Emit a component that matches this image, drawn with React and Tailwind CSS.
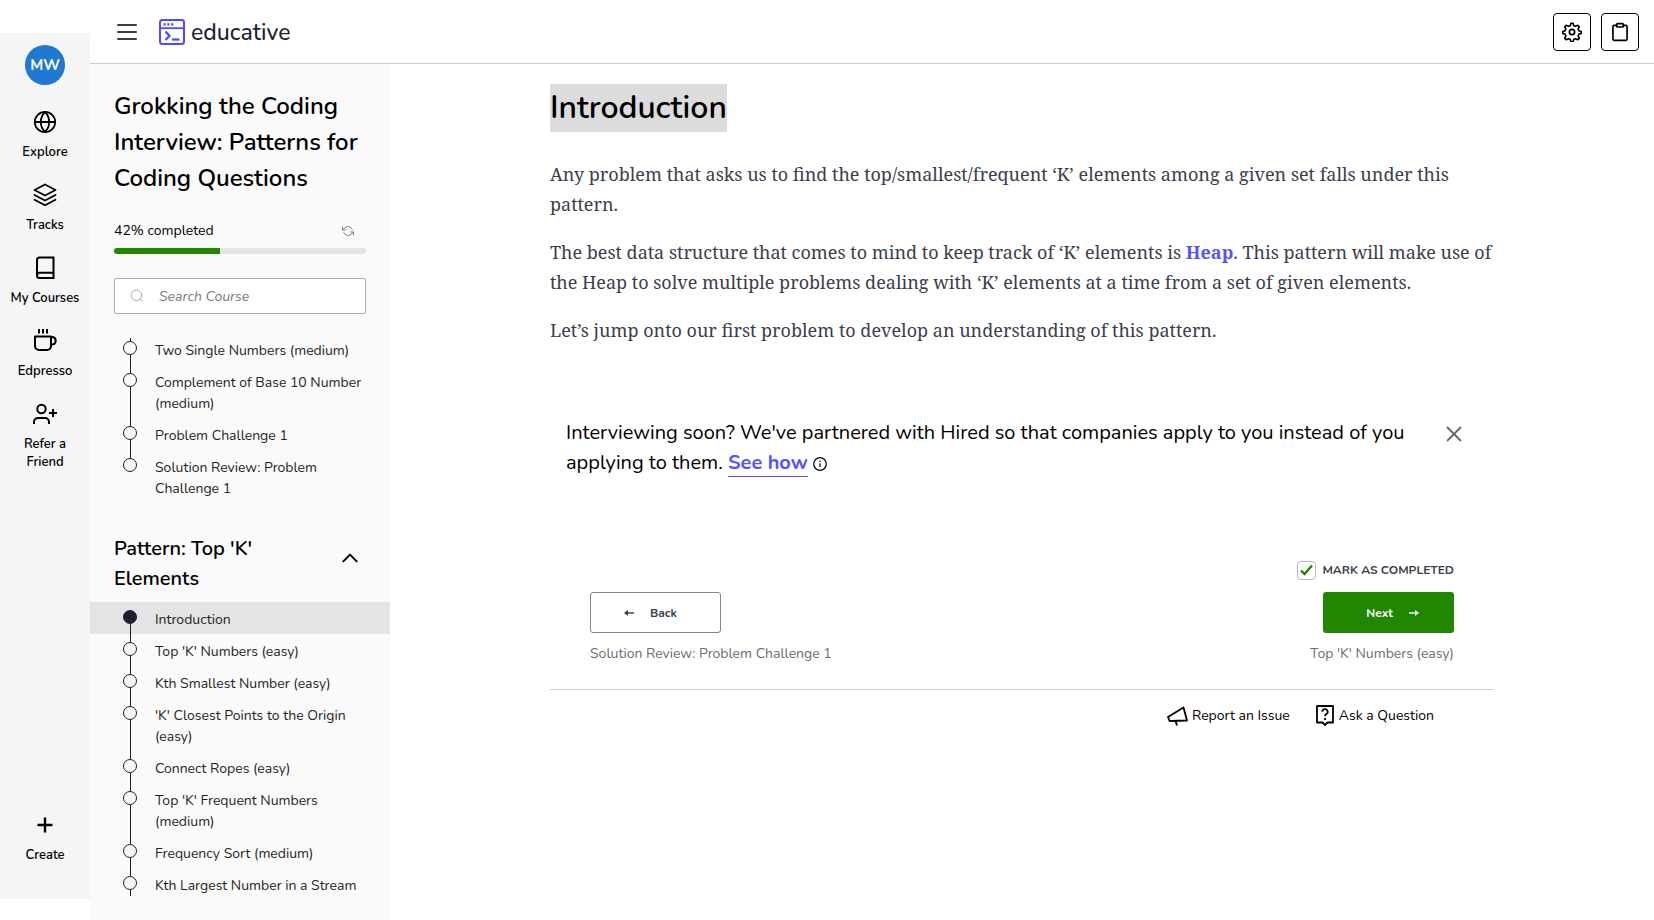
import React from "react";

const stroke = {
  fill: "none",
  stroke: "currentColor",
  strokeWidth: 2,
  strokeLinecap: "round",
  strokeLinejoin: "round",
};

function Icon({ size = 24, children, ...rest }) {
  return (
    <svg width={size} height={size} viewBox="0 0 24 24" aria-hidden="true" {...stroke} {...rest}>
      {children}
    </svg>
  );
}

const GlobeIcon = () => (
  <Icon strokeWidth={1.8}>
    <circle cx="12" cy="12" r="10.2" />
    <path d="M2 12h20" />
    <path d="M12 2c-2.600 2.600-4.200 6-4.200 10s1.600 7.400 4.200 10c2.600-2.600 4.200-6 4.200-10S14.600 4.600 12 2z" />
  </Icon>
);

const LayersIcon = () => (
  <Icon strokeWidth={1.8}>
    <path d="M12 1.500 1.500 7 12 12.500 22.500 7z" />
    <path d="m1.500 12 10.500 5.500L22.500 12" />
    <path d="m1.500 16.800 10.500 5.500 10.500-5.500" />
  </Icon>
);

const BookIcon = () => (
  <Icon strokeLinecap="butt" strokeLinejoin="miter">
    <path d="M4 19.500V4a2.500 2.500 0 0 1 2.500-2.500H20.500v20.500H6.500A2.500 2.500 0 0 1 4 19.500a2.500 2.500 0 0 1 2.500-2.800H20.500" />
  </Icon>
);

const CupIcon = () => (
  <Icon strokeLinecap="butt">
    <path d="M2 7.500h16v9.500a4 4 0 0 1-4 4H6a4 4 0 0 1-4-4z" />
    <path d="M18 8h1.500a3.800 3.800 0 0 1 0 7.500H18" />
    <path d="M6 0v4.500M10 0v4.500M14 0v4.500" />
  </Icon>
);

const UserPlusIcon = () => (
  <Icon strokeLinecap="butt">
    <circle cx="8.500" cy="7" r="4.200" />
    <path d="M1 22v-2a4 4 0 0 1 4-4h7a4 4 0 0 1 4 4v2" />
    <path d="M20 7v8M16 11h8" />
  </Icon>
);

const navItems = [
  { label: "Explore", icon: GlobeIcon },
  { label: "Tracks", icon: LayersIcon },
  { label: "My Courses", icon: BookIcon },
  { label: "Edpresso", icon: CupIcon },
  { label: "Refer a Friend", icon: UserPlusIcon },
];

function Rail() {
  return (
    <nav
      aria-label="Main"
      className="mt-[33px] mb-[21px] flex w-[90px] shrink-0 flex-col items-center bg-[#f5f5f5] pt-3 pb-[35px] text-[13px] leading-[18px] font-semibold text-black"
    >
      <button className="mb-[25px] flex h-10 w-10 items-center justify-center rounded-full bg-[#1f78d1] text-[15px] font-bold text-white">
        MW
      </button>
      <div className="flex flex-col items-center gap-[22px]">
        {navItems.map(({ label, icon: Glyph }) => (
          <a key={label} href="#" className="flex w-20 flex-col items-center gap-[9px] text-center">
            <Glyph />
            <span className={label === "Refer a Friend" ? "w-14" : ""}>{label}</span>
          </a>
        ))}
      </div>
      <button className="mt-auto flex flex-col items-center gap-[9px]">
        <Icon strokeLinecap="butt" strokeWidth={2.4}>
          <path d="M12 4.500v15M4.500 12h15" />
        </Icon>
        Create
      </button>
    </nav>
  );
}

function Logo() {
  return (
    <a href="#" className="flex items-center gap-1.5 text-[23px] leading-[30px] font-medium text-[#1f1f33]">
      <svg width="26" height="26" viewBox="0 0 26 26" fill="none" stroke="#4b4bff" aria-hidden="true">
        <rect x="1" y="1" width="24" height="24" rx="2.500" strokeWidth="2" />
        <path d="M1 9.200h24" strokeWidth="1.800" />
        <path d="M4.500 5.400h2.200M8.300 5.400h2.200M12.100 5.400h2.200" strokeWidth="2.200" />
        <path d="m6.500 12.500 4 4.200-4 4.200" strokeWidth="2.200" />
        <path d="M13 20.500h7.500" strokeWidth="2.200" />
      </svg>
      <span className="mt-0.5">educative</span>
    </a>
  );
}

function Header() {
  return (
    <header className="flex h-16 items-center border-b border-[#cfcfcf] pr-[15px] pl-[27px]">
      <button aria-label="Menu" className="mr-[22px] flex w-5 flex-col gap-[5px]">
        <span className="h-0.5 rounded-full bg-[#3d3d3d]" />
        <span className="h-0.5 rounded-full bg-[#3d3d3d]" />
        <span className="h-0.5 rounded-full bg-[#3d3d3d]" />
      </button>
      <Logo />
      <div className="ml-auto flex gap-2.5">
        <button aria-label="Settings" className="flex h-[38px] w-[38px] items-center justify-center rounded border border-black">
          <Icon size={20} strokeWidth={2}>
            <circle cx="12" cy="12" r="3.200" />
            <path d="M10.800 1.500h2.400l1 2.900 2 .8 2.800-1.300 1.700 1.700-1.300 2.800.8 2 2.900 1v2.400l-2.900 1-.8 2 1.300 2.800-1.700 1.700-2.800-1.300-2 .8-1 2.900h-2.400l-1-2.900-2-.8L5 21.300l-1.700-1.700 1.300-2.800-.8-2-2.900-1v-2.400l2.900-1 .8-2L3.300 5.600 5 3.900l2.800 1.300 2-.8z" />
          </Icon>
        </button>
        <button aria-label="Notes" className="flex h-[38px] w-[38px] items-center justify-center rounded border border-black">
          <Icon size={20}>
            <path d="M16 4h3a1.500 1.500 0 0 1 1.500 1.500v15a1.500 1.500 0 0 1-1.500 1.500H5a1.500 1.500 0 0 1-1.500-1.500v-15A1.500 1.500 0 0 1 5 4h3" />
            <rect x="8" y="2" width="8" height="4" rx="1" />
          </Icon>
        </button>
      </div>
    </header>
  );
}

const previousLessons = [
  "Two Single Numbers (medium)",
  "Complement of Base 10 Number (medium)",
  "Problem Challenge 1",
  "Solution Review: Problem Challenge 1",
];

const topKLessons = [
  "Introduction",
  "Top 'K' Numbers (easy)",
  "Kth Smallest Number (easy)",
  "'K' Closest Points to the Origin (easy)",
  "Connect Ropes (easy)",
  "Top 'K' Frequent Numbers (medium)",
  "Frequency Sort (medium)",
  "Kth Largest Number in a Stream",
];

function Lesson({ title, active, first, last }) {
  return (
    <li>
      <a
        href="#"
        aria-current={active ? "page" : undefined}
        className={`flex gap-[18px] pr-5 pl-[33px] ${active ? "bg-[#e4e4e4]" : ""}`}
      >
        <span className="flex w-3.5 shrink-0 flex-col items-center">
          <span className={`h-2 w-px ${first ? "" : "bg-[#1f1f33]"}`} />
          <span
            className={`h-3.5 w-3.5 rounded-full border border-[#1f1f33] ${active ? "bg-[#1f1f33]" : "bg-[#f8f8f8]"}`}
          />
          <span className={`w-px flex-1 ${last ? "" : "bg-[#1f1f33]"}`} />
        </span>
        <span className="pt-[7px] pb-1">{title}</span>
      </a>
    </li>
  );
}

function Sidebar() {
  return (
    <aside className="flex w-[300px] shrink-0 flex-col bg-[#fafafa] pt-6 pb-6">
      <div className="px-6">
        <h2 className="text-[24px] leading-9 font-semibold text-black">
          Grokking the Coding Interview: Patterns for Coding Questions
        </h2>
        <div className="mt-[25px] flex items-center justify-between pr-3 text-[14px] leading-5 text-black">
          <span id="progress-label">42% completed</span>
          <button aria-label="Reset progress" className="text-[#777777]">
            <Icon size={12} strokeWidth={1.8}>
              <path d="M1 4v6h6M23 20v-6h-6" />
              <path d="M20.500 9A9 9 0 0 0 5.600 5.600L1 10m22 4-4.600 4.400A9 9 0 0 1 3.500 15" />
            </Icon>
          </button>
        </div>
        <div
          role="progressbar"
          aria-labelledby="progress-label"
          aria-valuenow={42}
          className="mt-[7px] h-1.5 overflow-hidden rounded-full bg-[#e4e4e4]"
        >
          <div className="h-full w-[42%] bg-[#218700]" />
        </div>
        <label className="mt-6 flex h-9 items-center gap-[15px] rounded-xs border border-[#ababb2] bg-white pr-3 pl-[15px] text-[#9a9a9a]">
          <Icon size={14} strokeWidth={1.5}>
            <circle cx="11" cy="11" r="9" />
            <path d="m18 18 4 4" />
          </Icon>
          <input
            type="text"
            aria-label="Search Course"
            placeholder="Search Course"
            className="min-w-0 flex-1 text-[14px] text-[#333333] italic outline-none placeholder:text-[#7b7b7b]"
          />
        </label>
      </div>

      <div className="mt-6 overflow-hidden text-[14px] leading-[21px] text-[#1f1f1f]">
        <ul className="-mt-[5px]">
          {previousLessons.map((title, i) => (
            <Lesson key={title} title={title} last={i === previousLessons.length - 1} />
          ))}
        </ul>
        <button className="mt-[31px] mb-2 flex w-full items-start justify-between pr-[30px] pl-6 text-left text-[20px] leading-[30px] font-semibold text-black">
          <span className="w-40">Pattern: Top 'K' Elements</span>
          <Icon size={20} strokeWidth={2.4} className="mt-3.5">
            <path d="m4 16 8-8 8 8" />
          </Icon>
        </button>
        <ul className="-mb-1">
          {topKLessons.map((title, i) => (
            <Lesson key={title} title={title} active={i === 0} first={i === 0} />
          ))}
        </ul>
      </div>
    </aside>
  );
}

function Article() {
  return (
    <article>
      <h1 className="text-[32px] leading-[48px] font-semibold text-black">
        <span className="inline-block bg-[#dcdcdc]">Introduction</span>
      </h1>
      <div className="mt-[27px] flex flex-col gap-[18px] font-['Noto_Serif','Liberation_Serif',serif] text-[18px] leading-[30px] text-[#3d3d4e]">
        <p>
          Any problem that asks us to find the top/smallest/frequent ‘K’ elements among a given set falls under this
          pattern.
        </p>
        <p>
          The best data structure that comes to mind to keep track of ‘K’ elements is{" "}
          <a href="#" className="font-bold text-[#5553ff]">
            Heap
          </a>
          . This pattern will make use of the Heap to solve multiple problems dealing with ‘K’ elements at a time from a
          set of given elements.
        </p>
        <p>Let’s jump onto our first problem to develop an understanding of this pattern.</p>
      </div>
    </article>
  );
}

function Promo() {
  return (
    <aside className="mt-[73px] flex items-start justify-between pr-8 pl-4 text-[20px] leading-[30px] text-black">
      <p className="max-w-[860px]">
        Interviewing soon? We've partnered with Hired so that companies apply to you instead of you applying to them.{" "}
        <a href="#" className="border-b border-[#5553ff] font-bold text-[#5553ff]">
          See how
        </a>{" "}
        <svg width="14" height="14" viewBox="0 0 14 14" className="inline-block align-middle" fill="none" stroke="black" aria-hidden="true">
          <circle cx="7" cy="7" r="6.300" strokeWidth="1.200" />
          <path d="M7 6.200v4M7 3.600v1.400" strokeWidth="1.200" />
        </svg>
      </p>
      <button aria-label="Dismiss" className="mt-2 text-[#666666]">
        <svg width="16" height="16" viewBox="0 0 16 16" fill="none" stroke="currentColor" strokeWidth="1.800" aria-hidden="true">
          <path d="m1 1 14 14M15 1 1 15" />
        </svg>
      </button>
    </aside>
  );
}

const Arrow = ({ flip }) => (
  <svg width="10" height="6" viewBox="0 0 10 6" className={flip ? "rotate-180" : ""} aria-hidden="true">
    <path d="M0 3h7" stroke="currentColor" strokeWidth="1.400" />
    <path d="M6 0 10 3 6 6z" fill="currentColor" />
  </svg>
);

function LessonNav() {
  return (
    <section className="mt-[82px] border-b border-[#cfcfcf] pr-10 pb-[25px] pl-10">
      <div className="flex justify-end">
        <label className="flex items-center gap-1.5 text-[12px] leading-5 font-bold text-[#3d3d4e]">
          <span className="grid h-[19px] w-[19px] place-items-center">
            <input
              type="checkbox"
              defaultChecked
              className="col-start-1 row-start-1 h-[19px] w-[19px] appearance-none rounded border border-[#b8b8b8] bg-white"
            />
            <svg
              width="13"
              height="12"
              viewBox="0 0 13 12"
              className="pointer-events-none col-start-1 row-start-1"
              fill="none"
              stroke="#218700"
              strokeWidth="2.400"
              aria-hidden="true"
            >
              <path d="m1 6.500 3.500 3.500L12 1.500" />
            </svg>
          </span>
          MARK AS COMPLETED
        </label>
      </div>
      <div className="mt-3 flex justify-between text-[14px] leading-5 text-[#6b6b7b]">
        <div className="flex flex-col items-start gap-[11px]">
          <button className="flex h-[41px] w-[131px] items-center justify-center gap-4 rounded-[3px] border border-[#85858f] pr-2.5 text-[12px] font-bold text-[#3d3d4e]">
            <Arrow flip />
            Back
          </button>
          <span>Solution Review: Problem Challenge 1</span>
        </div>
        <div className="flex flex-col items-end gap-[11px]">
          <button className="flex h-[41px] w-[131px] items-center justify-center gap-4 rounded-[3px] bg-[#218700] pl-2 text-[12px] font-bold text-white">
            Next
            <Arrow />
          </button>
          <span>Top 'K' Numbers (easy)</span>
        </div>
      </div>
    </section>
  );
}

function Support() {
  return (
    <footer className="flex items-center justify-end gap-[26px] pt-[15px] pr-[60px] text-[14px] leading-5 text-black">
      <a href="#" className="flex items-center gap-1">
        <svg width="21" height="20" viewBox="0 0 21 20" fill="none" stroke="currentColor" strokeWidth="1.800" strokeLinejoin="round" aria-hidden="true">
          <path d="M1 11 16.500 1.500 20 14.500 2.500 15z" />
          <path d="m8.500 15 1.500 4.500" />
        </svg>
        Report an Issue
      </a>
      <a href="#" className="flex items-center gap-[5px]">
        <svg width="18" height="21" viewBox="0 0 18 21" fill="none" stroke="currentColor" strokeWidth="1.800" strokeLinejoin="round" aria-hidden="true">
          <path d="M1 1h16v16.500h-5.500L9 20l-2.500-2.500H1z" />
          <path d="M6.300 6.800a2.700 2.700 0 1 1 3.800 2.500c-.8.400-1.100.9-1.100 1.900M9 13v2" />
        </svg>
        Ask a Question
      </a>
    </footer>
  );
}

export default function App() {
  return (
    <div className="flex min-h-screen bg-white font-['Nunito','Nunito_Sans','Lato','Liberation_Sans',sans-serif]">
      <Rail />
      <div className="flex min-w-0 flex-1 flex-col">
        <Header />
        <div className="flex flex-1">
          <Sidebar />
          <main className="min-w-0 flex-1 px-6 pt-5">
            <div className="mx-auto max-w-[944px]">
              <Article />
              <Promo />
              <LessonNav />
              <Support />
            </div>
          </main>
        </div>
      </div>
    </div>
  );
}
